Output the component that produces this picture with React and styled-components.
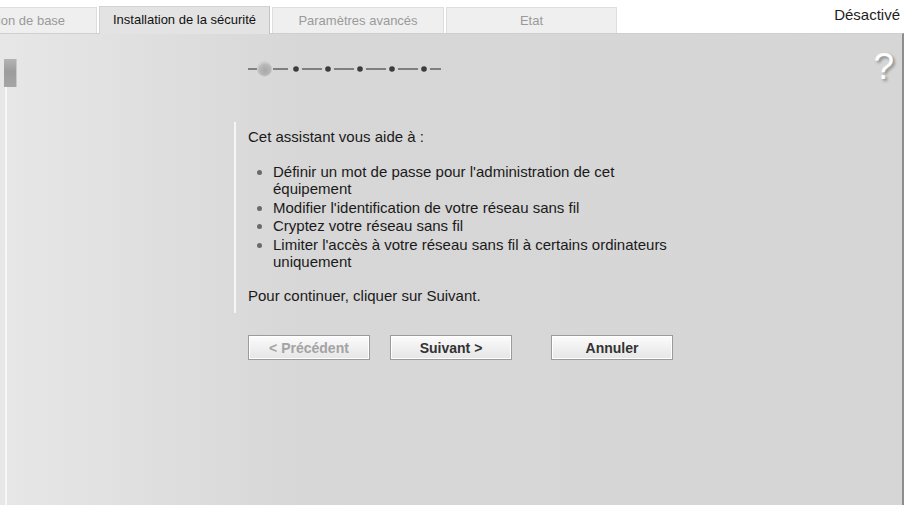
import React from 'react';
import styled, { createGlobalStyle } from 'styled-components';

const Global = createGlobalStyle`
  html, body {
    margin: 0;
    padding: 0;
    background: #fff;
    overflow: hidden;
  }
  body {
    font-family: "Liberation Sans", Arial, sans-serif;
    color: #1a1a1a;
  }
`;

const Page = styled.div`
  width: 906px;
  height: 505px;
  display: flex;
  flex-direction: column;
  overflow: hidden;
`;

const TabBar = styled.div`
  height: 33px;
  display: flex;
  align-items: flex-end;
  flex: none;
`;

const TabStrip = styled.div`
  display: flex;
  align-items: flex-end;
  gap: 2px;
  margin-left: -94px;
`;

const Tab = styled.div`
  width: ${p => p.$width}px;
  height: ${p => (p.$active ? 28 : 26)}px;
  box-sizing: border-box;
  display: flex;
  align-items: center;
  justify-content: center;
  padding-bottom: ${p => (p.$active ? 2 : 0)}px;
  font-size: 13px;
  white-space: nowrap;
  color: ${p => (p.$active ? '#111' : '#9a9a9a')};
  background: ${p => (p.$active ? '#e3e3e3' : '#efefef')};
  border: 1px solid ${p => (p.$active ? '#d2d2d2' : '#dedede')};
  border-right-color: ${p => (p.$active ? '#c2c2c2' : '#dedede')};
  border-bottom: none;
  margin-bottom: ${p => (p.$active ? -1 : 0)}px;
  position: relative;
  z-index: ${p => (p.$active ? 1 : 0)};
`;

const Status = styled.div`
  margin-left: auto;
  align-self: flex-start;
  padding: 6px 6px 0 0;
  font-size: 15px;
  color: #1e1e1e;
`;

const Panel = styled.div`
  flex: 1;
  display: flex;
  margin-right: 2px;
  border-top: 1px solid #cfcfcf;
  border-right: 2px solid #8d8d8d;
  background: linear-gradient(to right, #e7e7e7 0, #d7d7d7 300px, #d6d6d6 100%);
`;

const Rail = styled.div`
  width: 234px;
  flex: none;
  padding-left: 4px;
  box-sizing: border-box;
`;

const Track = styled.div`
  height: 100%;
  margin-left: 1px;
  border-left: 2px solid #f7f7f7;
`;

const Handle = styled.div`
  width: 12px;
  height: 28px;
  margin: 25px 0 0 -3px;
  background: linear-gradient(#b4b4b4, #9c9c9c 45%, #a6a6a6);
  border-right: 1px solid #c9c9c9;
`;

const Wizard = styled.div`
  display: flex;
  flex-direction: column;
  padding-top: 27px;
`;

const Steps = styled.svg`
  display: block;
  margin-left: 14px;
`;

const Intro = styled.div`
  margin-top: 45px;
  width: 437px;
  border-left: 2px solid #f6f6f6;
  padding: 6px 0 9px 12px;
  font-size: 15px;
  line-height: 17.5px;
  color: #1a1a1a;
`;

const Para = styled.p`
  margin: 0;
`;

const Points = styled.ul`
  list-style: none;
  margin: 17px 0 16px;
  padding: 0;
`;

const Point = styled.li`
  display: flex;
  & + & {
    margin-top: 1px;
  }
  &::before {
    content: '';
    flex: none;
    width: 5px;
    height: 5px;
    border-radius: 50%;
    background: #6a6a6a;
    margin: 7px 11px 0 9px;
  }
`;

const Buttons = styled.div`
  display: flex;
  gap: 20px;
  margin: 22px 0 0 14px;
`;

const Button = styled.button`
  width: 122px;
  height: 25px;
  margin-left: ${p => p.$offset || 0}px;
  padding: 0;
  font-family: "Liberation Sans", Arial, sans-serif;
  font-size: 14px;
  font-weight: bold;
  color: ${p => (p.disabled ? '#a3a3a3' : '#333')};
  background: linear-gradient(#fcfcfc, #f0f0f0 50%, #e6e6e6);
  border: 1px solid #9b9b9b;
  box-shadow: inset 0 0 0 1px #fff;
  cursor: ${p => (p.disabled ? 'default' : 'pointer')};
`;

const Help = styled.div`
  margin-left: auto;
  padding: 14px 8px 0 0;
  font-family: "Liberation Sans", Arial, sans-serif;
  font-size: 37px;
  line-height: 37px;
  color: #fff;
  text-shadow: 2px 2px 3px #8a8a8a;
`;

const STEP_DOTS = [48, 80, 112, 144, 176];

function Stepper() {
  return (
    <Steps width="196" height="16" viewBox="0 0 196 16">
      <defs>
        <radialGradient id="cur" cx="0.55" cy="0.6" r="0.6">
          <stop offset="0" stopColor="#a8a8a8" />
          <stop offset="0.7" stopColor="#b8b8b8" />
          <stop offset="1" stopColor="#d6d6d6" />
        </radialGradient>
      </defs>
      <g stroke="#444" strokeWidth="1.2">
        <line x1="0" y1="8" x2="9" y2="8" />
        <line x1="25" y1="8" x2="40" y2="8" />
        {STEP_DOTS.slice(0, -1).map(x => (
          <line key={x} x1={x + 6} y1="8" x2={x + 26} y2="8" />
        ))}
        <line x1="182" y1="8" x2="193" y2="8" />
      </g>
      <circle cx="16.5" cy="8" r="7.2" fill="url(#cur)" stroke="#c8c8c8" strokeWidth="0.8" />
      {STEP_DOTS.map(x => (
        <circle key={x} cx={x} cy="8" r="2.8" fill="#3c3c3c" />
      ))}
    </Steps>
  );
}

const tabs = [
  { label: 'Configuration de base', width: 191 },
  { label: 'Installation de la sécurité', width: 171, active: true },
  { label: 'Paramètres avancés', width: 172 },
  { label: 'Etat', width: 171 },
];

export default function App() {
  return (
    <Page>
      <Global />
      <TabBar>
        <TabStrip>
          {tabs.map(t => (
            <Tab key={t.label} $width={t.width} $active={t.active}>
              {t.label}
            </Tab>
          ))}
        </TabStrip>
        <Status>Désactivé</Status>
      </TabBar>
      <Panel>
        <Rail>
          <Track>
            <Handle />
          </Track>
        </Rail>
        <Wizard>
          <Stepper />
          <Intro>
            <Para>Cet assistant vous aide à :</Para>
            <Points>
              <Point>Définir un mot de passe pour l'administration de cet équipement</Point>
              <Point>Modifier l'identification de votre réseau sans fil</Point>
              <Point>Cryptez votre réseau sans fil</Point>
              <Point>Limiter l'accès à votre réseau sans fil à certains ordinateurs uniquement</Point>
            </Points>
            <Para>Pour continuer, cliquer sur Suivant.</Para>
          </Intro>
          <Buttons>
            <Button disabled>&lt; Précédent</Button>
            <Button>Suivant &gt;</Button>
            <Button $offset={19}>Annuler</Button>
          </Buttons>
        </Wizard>
        <Help>?</Help>
      </Panel>
    </Page>
  );
}
